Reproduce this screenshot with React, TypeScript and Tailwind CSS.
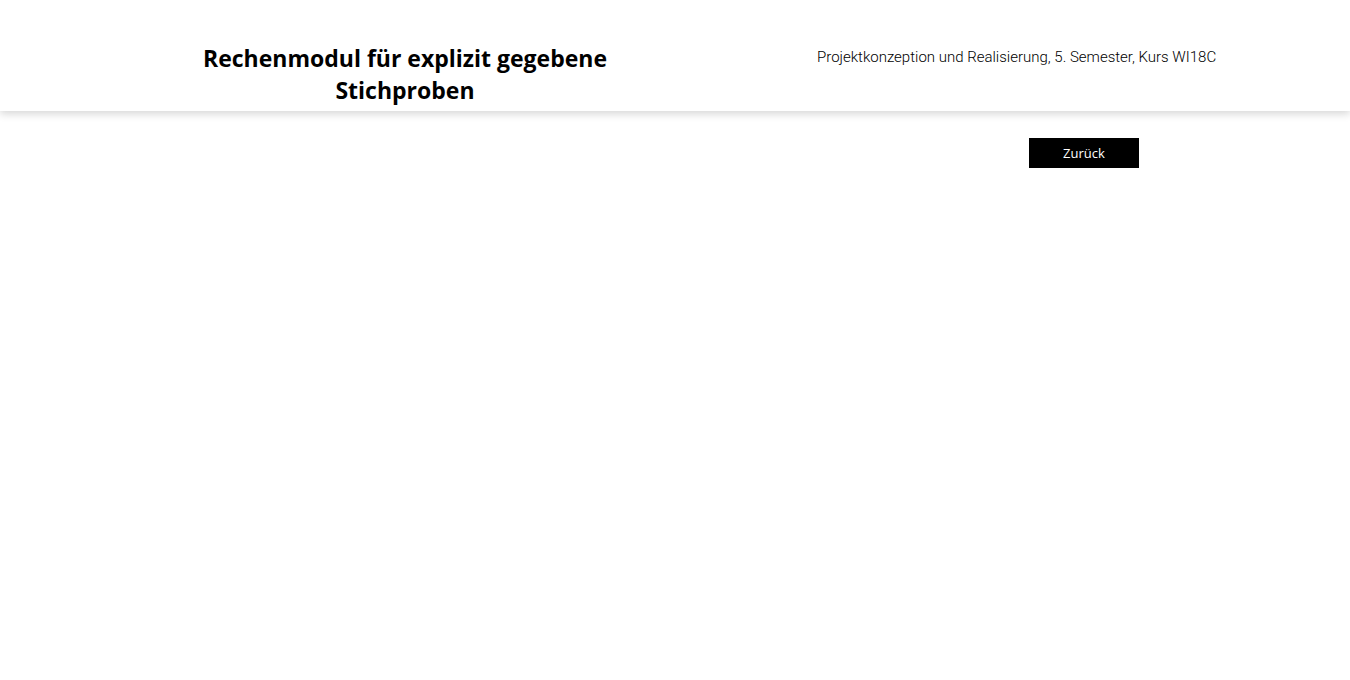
import React from "react";

export default function App() {
  return (
    <div className="min-h-[680px] w-full bg-white">
      <header className="flex h-[111px] items-start bg-white shadow-[0_3px_8px_rgba(0,0,0,0.16)]">
        <div className="w-[810px] pt-[42px] text-center">
          <h1
            className="text-[23px] font-bold leading-[32px] text-black"
            style={{ fontFamily: "'Open Sans', sans-serif" }}
          >
            Rechenmodul für explizit gegebene
            <br />
            Stichproben
          </h1>
        </div>
        <div className="pl-[7px] pt-[46px]">
          <p
            className="text-[15px] font-light leading-[22px] text-black"
            style={{ fontFamily: "Roboto, sans-serif" }}
          >
            Projektkonzeption und Realisierung, 5. Semester, Kurs WI18C
          </p>
        </div>
      </header>
      <main className="flex justify-end pr-[211px] pt-[27px]">
        <button
          className="h-[30px] w-[110px] bg-black pt-[2px] text-[13px] text-white"
          style={{ fontFamily: "'Open Sans', sans-serif" }}
        >
          Zurück
        </button>
      </main>
    </div>
  );
}
